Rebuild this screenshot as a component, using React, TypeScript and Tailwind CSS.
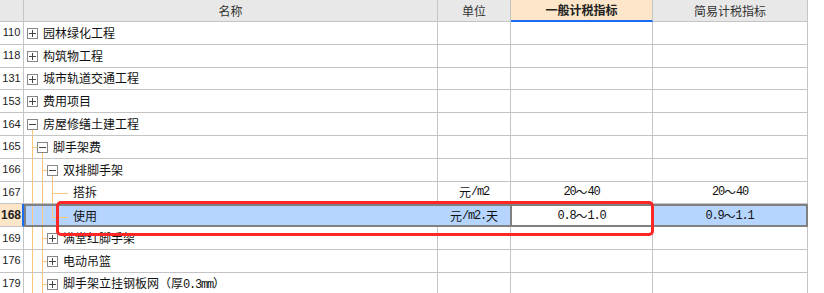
import React from 'react';

const LINE = '#fcc77c';
const BOX = '#878787';

type Guide = 'full' | 'half';
type Row = {
  no: string;
  level: number;
  kind: 'plus' | 'minus' | 'leaf';
  name: string;
  guides: Guide[];
  down?: boolean;
  unit?: string;
  general?: string;
  simple?: string;
  selected?: boolean;
};

const rows: Row[] = [
  { no: '110', level: 0, kind: 'plus', name: '园林绿化工程', guides: [] },
  { no: '118', level: 0, kind: 'plus', name: '构筑物工程', guides: [] },
  { no: '131', level: 0, kind: 'plus', name: '城市轨道交通工程', guides: [] },
  { no: '153', level: 0, kind: 'plus', name: '费用项目', guides: [] },
  { no: '164', level: 0, kind: 'minus', name: '房屋修缮土建工程', guides: [], down: true },
  { no: '165', level: 1, kind: 'minus', name: '脚手架费', guides: ['full'], down: true },
  { no: '166', level: 2, kind: 'minus', name: '双排脚手架', guides: ['full', 'full'], down: true },
  { no: '167', level: 3, kind: 'leaf', name: '搭拆', guides: ['full', 'full', 'full'], unit: '元/m2', general: '20～40', simple: '20～40' },
  { no: '168', level: 3, kind: 'leaf', name: '使用', guides: ['full', 'full', 'half'], unit: '元/m2.天', general: '0.8～1.0', simple: '0.9～1.1', selected: true },
  { no: '169', level: 2, kind: 'plus', name: '满堂红脚手架', guides: ['full', 'full'] },
  { no: '176', level: 2, kind: 'plus', name: '电动吊篮', guides: ['full', 'full'] },
  { no: '179', level: 2, kind: 'plus', name: '脚手架立挂钢板网（厚0.3mm）', guides: ['full', 'full'] },
];

// 半角はSimSun風の等幅で
function Mixed({ text }: { text: string }) {
  const parts = text.split(/([\x20-\x7e]+)/).filter(Boolean);
  return (
    <>
      {parts.map((p, i) =>
        /^[\x20-\x7e]+$/.test(p) ? (
          <span key={i} className="font-['Liberation_Mono',monospace] tracking-[-1.2px]">
            {p}
          </span>
        ) : (
          <span key={i}>{p}</span>
        )
      )}
    </>
  );
}

function TreeGlyph({ row }: { row: Row }) {
  const L = row.level;
  const w = 19 + 10 * L;
  return (
    <svg width={w} className="h-full shrink-0" fill="none" strokeWidth={1} shapeRendering="crispEdges">
      {row.guides.map((g, i) => (
        <line key={i} x1={8.5 + 10 * i} x2={8.5 + 10 * i} y1={0} y2={g === 'full' ? '100%' : 11.5} stroke={LINE} />
      ))}
      {row.kind === 'leaf' ? (
        <line x1={8.5 + 10 * (L - 1)} x2={44} y1={11.5} y2={11.5} stroke={LINE} />
      ) : (
        <>
          {L > 0 && <line x1={8.5 + 10 * (L - 1)} x2={3 + 10 * L} y1={11.5} y2={11.5} stroke={LINE} />}
          {row.down && <line x1={8.5 + 10 * L} x2={8.5 + 10 * L} y1={17} y2="100%" stroke={LINE} />}
          <rect x={3.5 + 10 * L} y={6.5} width={10} height={10} fill="#fff" stroke={BOX} />
          <line x1={5 + 10 * L} x2={12 + 10 * L} y1={11.5} y2={11.5} stroke="#444" />
          {row.kind === 'plus' && <line x1={8.5 + 10 * L} x2={8.5 + 10 * L} y1={8} y2={15} stroke="#444" />}
        </>
      )}
    </svg>
  );
}

export default function App() {
  return (
    <div className="relative w-[824px] h-[293px] overflow-hidden bg-white text-[12px] text-[#111] font-['Noto_Sans_CJK_SC',sans-serif] leading-none">
      {/* ヘッダー */}
      <div className="flex h-[22px] w-[808px] text-[#333]">
        <div className="w-[24px] bg-[#e8e8e8] border-r border-b border-[#c4c4c4]" />
        <div className="w-[414px] bg-[#e8e8e8] border-r border-b border-[#c4c4c4] flex items-center justify-center">名称</div>
        <div className="w-[73px] bg-[#e8e8e8] border-r border-b border-[#c4c4c4] flex items-center justify-center">单位</div>
        <div className="w-[142px] bg-[#fde6c9] border-r border-r-[#c4c4c4] border-b-2 border-b-[#1a6cf5] flex items-center justify-center font-bold text-[#222]">
          一般计税指标
        </div>
        <div className="w-[155px] bg-[#e8e8e8] border-r border-b border-[#c4c4c4] flex items-center justify-center">简易计税指标</div>
      </div>

      {/* 行 */}
      {rows.map((row) =>
        row.selected ? (
          <div key={row.no} className="flex h-[22.8px] w-[808px]">
            <div className="w-[24px] bg-[#fde5c8] border-r-2 border-r-[#1a6cf5] border-b border-b-[#c4c4c4] flex items-center justify-center font-['Liberation_Sans',sans-serif] font-bold text-[12px] text-[#222]">
              {row.no}
            </div>
            <div className="flex w-[784px] h-full border-2 border-[#808080] bg-[#b5d5ff]">
              <div className="w-[414px] -ml-[2px] h-full flex items-center">
                <TreeGlyph row={row} />
                <span className="whitespace-nowrap">{row.name}</span>
              </div>
              <div className="w-[72px] flex items-center justify-center whitespace-nowrap">
                <Mixed text={row.unit ?? ''} />
              </div>
              <div className="w-[143px] bg-white border-x-2 border-[#808080] flex items-center justify-center whitespace-nowrap">
                <Mixed text={row.general ?? ''} />
              </div>
              <div className="flex-1 flex items-center justify-center whitespace-nowrap">
                <Mixed text={row.simple ?? ''} />
              </div>
            </div>
          </div>
        ) : (
          <div key={row.no} className="flex h-[22.8px] w-[808px]">
            <div className="w-[24px] border-r border-b border-[#c4c4c4] flex items-center justify-center font-['Liberation_Sans',sans-serif] text-[11px] text-[#222]">
              {row.no}
            </div>
            <div className="w-[414px] border-r border-b border-[#c4c4c4] flex items-center">
              <TreeGlyph row={row} />
              <span className="whitespace-nowrap">
                <Mixed text={row.name} />
              </span>
            </div>
            <div className="w-[73px] border-r border-b border-[#c4c4c4] flex items-center justify-center whitespace-nowrap">
              {row.unit && <Mixed text={row.unit} />}
            </div>
            <div className="w-[142px] border-r border-b border-[#c4c4c4] flex items-center justify-center whitespace-nowrap">
              {row.general && <Mixed text={row.general} />}
            </div>
            <div className="w-[155px] border-r border-b border-[#c4c4c4] flex items-center justify-center whitespace-nowrap">
              {row.simple && <Mixed text={row.simple} />}
            </div>
          </div>
        )
      )}

      {/* 注記の赤枠 */}
      <div className="absolute left-[56px] top-[201px] w-[598px] h-[35px] border-[3px] border-[#ff2626] rounded-[5px] pointer-events-none" />
    </div>
  );
}
